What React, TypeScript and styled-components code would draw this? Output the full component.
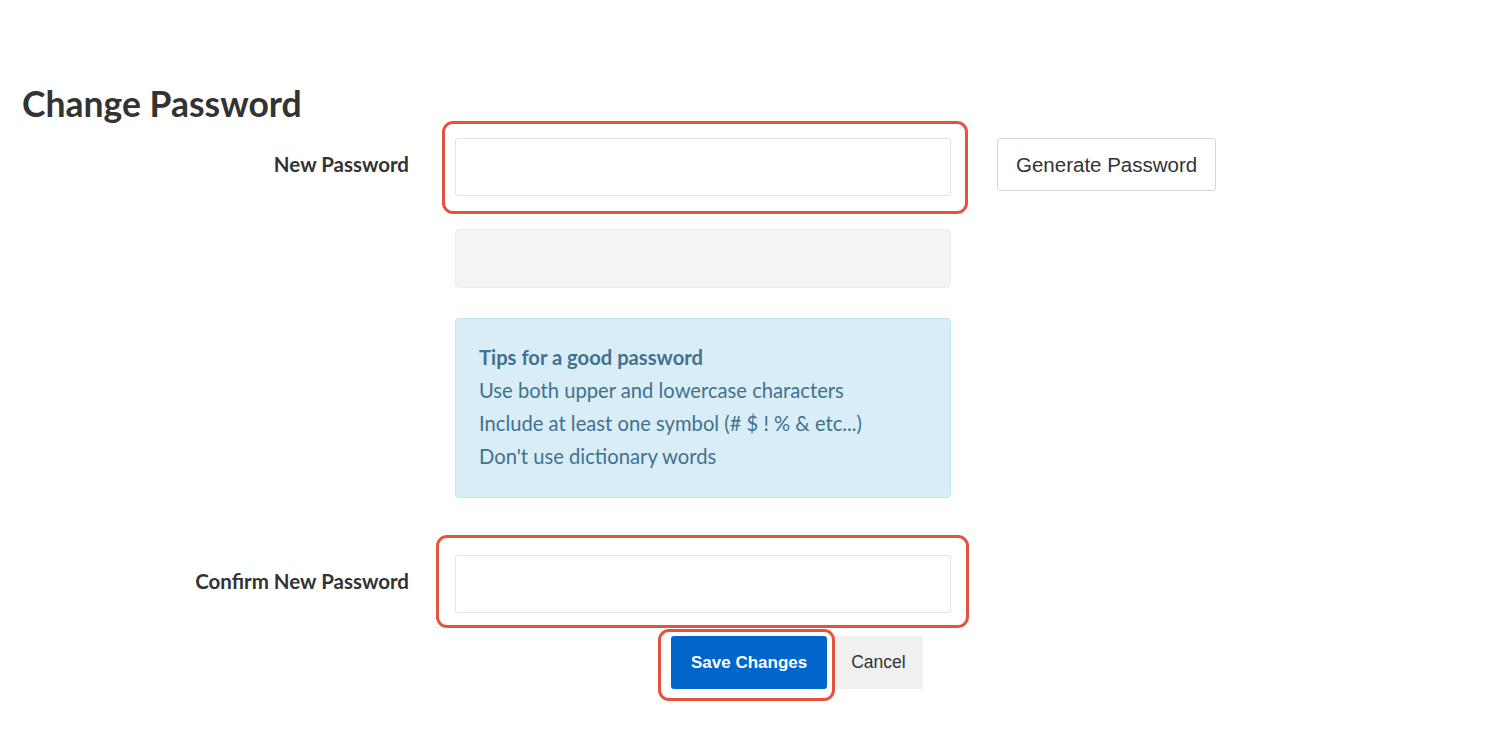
import React from "react";
import styled, { createGlobalStyle } from "styled-components";

const Global = createGlobalStyle`
  html, body { margin: 0; padding: 0; background: #fff; }
  body { font-family: Lato, "Open Sans", sans-serif; color: #333; }
`;

const Page = styled.div`
  padding: 82px 0 60px 22px;
`;

const Title = styled.h1`
  margin: 0 0 12px 0;
  font-family: Lato, sans-serif;
  font-weight: 700;
  font-size: 35.5px;
  line-height: 44px;
  color: #333;
`;

const Form = styled.div`
  display: grid;
  grid-template-columns: 387px 496px auto;
  column-gap: 46px;
  align-items: start;
`;

const Label = styled.label<{ $top: number }>`
  grid-column: 1;
  text-align: right;
  font-family: Lato, sans-serif;
  font-weight: 700;
  font-size: 20.5px;
  line-height: 24px;
  color: #333;
  padding-top: ${(p) => p.$top}px;
`;

const Field = styled.div<{ $mt?: number }>`
  grid-column: 2;
  position: relative;
  margin-top: ${(p) => p.$mt ?? 0}px;
`;

const Input = styled.input`
  box-sizing: border-box;
  display: block;
  width: 100%;
  height: 58px;
  border: 1px solid #e3e3e3;
  border-radius: 3px;
  background: #fff;
  outline: none;
  padding: 0 12px;
  font-size: 18px;
`;

const Highlight = styled.div<{ $t: number; $r: number; $b: number; $l: number }>`
  position: absolute;
  top: ${(p) => -p.$t}px;
  right: ${(p) => -p.$r}px;
  bottom: ${(p) => -p.$b}px;
  left: ${(p) => -p.$l}px;
  border: 3px solid #e4533d;
  border-radius: 11px;
  pointer-events: none;
`;

const SideCell = styled.div`
  grid-column: 3;
`;

const GenerateButton = styled.button`
  display: block;
  height: 53px;
  padding: 0 18px;
  background: #fff;
  border: 1px solid #d6d6d6;
  border-radius: 3px;
  font-family: "Liberation Sans", Arial, sans-serif;
  font-size: 20.5px;
  color: #333;
`;

const Strength = styled.div`
  grid-column: 2;
  margin-top: 33px;
  height: 59px;
  box-sizing: border-box;
  background: #f4f4f4;
  border: 1px solid #ececec;
  border-radius: 4px;
`;

const Tips = styled.div`
  grid-column: 2;
  margin-top: 30px;
  box-sizing: border-box;
  height: 180px;
  padding: 22px 23px 0;
  background: #d9edf7;
  border: 1px solid #bce8f1;
  border-radius: 4px;
  color: #41728f;
  font-family: Lato, sans-serif;
  font-size: 20.2px;
`;

const TipLine = styled.div<{ $bold?: boolean }>`
  line-height: 33px;
  font-weight: ${(p) => (p.$bold ? 700 : 400)};
`;

const Actions = styled.div`
  grid-column: 2 / span 2;
  display: flex;
  align-items: flex-start;
  margin: 23px 0 0 216px;
`;

const ActionWrap = styled.div`
  position: relative;
  display: flex;
`;

const PrimaryButton = styled.button`
  display: block;
  height: 53px;
  padding: 0 20px;
  background: #0066cc;
  border: 0;
  border-radius: 3px;
  color: #fff;
  font-family: "Liberation Sans", Arial, sans-serif;
  font-weight: 700;
  font-size: 17px;
`;

const SecondaryButton = styled.button`
  display: block;
  height: 53px;
  margin-left: 7px;
  padding: 0 17px;
  background: #f0f0f0;
  border: 0;
  border-radius: 3px;
  color: #333;
  font-family: "Liberation Sans", Arial, sans-serif;
  font-size: 17.5px;
`;

export default function App() {
  return (
    <>
      <Global />
      <Page>
        <Title>Change Password</Title>
        <Form>
          <Label $top={14}>New Password</Label>
          <Field>
            <Input type="password" />
            <Highlight $t={17} $r={17} $b={18} $l={13} />
          </Field>
          <SideCell>
            <GenerateButton>Generate Password</GenerateButton>
          </SideCell>

          <Strength />

          <Tips>
            <TipLine $bold>Tips for a good password</TipLine>
            <TipLine>Use both upper and lowercase characters</TipLine>
            <TipLine>Include at least one symbol (# $ ! % &amp; etc...)</TipLine>
            <TipLine>Don't use dictionary words</TipLine>
          </Tips>

          <Label $top={71}>Confirm New Password</Label>
          <Field $mt={57}>
            <Input type="password" />
            <Highlight $t={20} $r={18} $b={15} $l={19} />
          </Field>

          <Actions>
            <ActionWrap>
              <PrimaryButton>Save Changes</PrimaryButton>
              <Highlight $t={7} $r={8} $b={12} $l={13} />
            </ActionWrap>
            <SecondaryButton>Cancel</SecondaryButton>
          </Actions>
        </Form>
      </Page>
    </>
  );
}
